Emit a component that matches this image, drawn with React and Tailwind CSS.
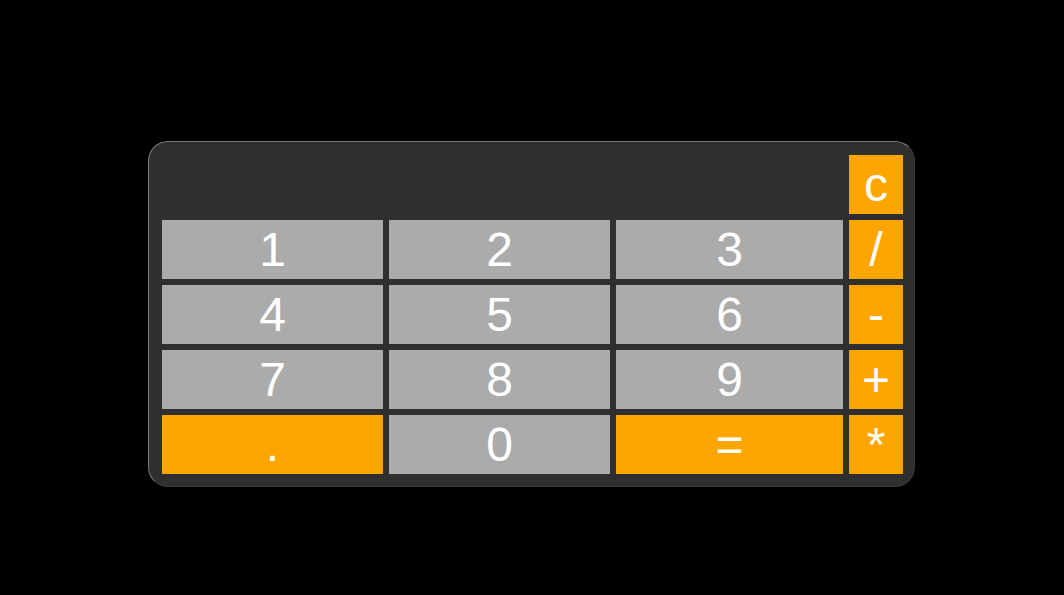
const rows = [
  [
    { k: '1' }, { k: '2' }, { k: '3' }, { k: '/', op: true },
  ],
  [
    { k: '4' }, { k: '5' }, { k: '6' }, { k: '-', op: true },
  ],
  [
    { k: '7' }, { k: '8' }, { k: '9' }, { k: '+', op: true },
  ],
  [
    { k: '.', op: true }, { k: '0' }, { k: '=', op: true }, { k: '*', op: true },
  ],
];

function Key({ k, op }) {
  return (
    <button
      className={
        'h-[59px] text-white text-[48px] leading-[59px] flex items-center justify-center ' +
        (op ? 'bg-[#ffa500]' : 'bg-[#ababab]')
      }
    >
      {k}
    </button>
  );
}

export default function App() {
  return (
    <div
      className="min-h-[595px] bg-black pt-[141px] pl-[148px]"
      style={{ fontFamily: '"Liberation Sans", Arial, sans-serif' }}
    >
      <div className="w-[767px] rounded-[20px] bg-[#2f2f2f] border border-[#7a7a7a] border-r-[#3a3a3a] border-b-[#3a3a3a] pt-[13px] pl-[13px] pr-[11px] pb-[12px]">
        <div className="grid grid-cols-[221px_221px_227px_54px] gap-[6px]">
          <div className="col-span-3 h-[59px]" />
          <Key k="c" op />
          {rows.map((r, i) => r.map((b, j) => <Key key={i + '-' + j} {...b} />))}
        </div>
      </div>
    </div>
  );
}
